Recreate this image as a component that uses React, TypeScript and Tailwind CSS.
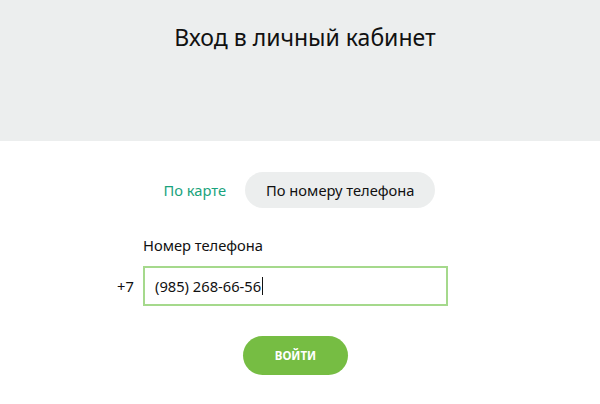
import React from "react";

export default function App() {
  return (
    <div className="w-[600px] h-[404px] bg-white overflow-hidden" style={{ fontFamily: '"Noto Sans", "Open Sans", sans-serif' }}>
      <div className="h-[141px] bg-[#eceeee] pt-[21px] flex justify-center">
        <h1 className="text-[23px] leading-[32px] text-[#111] pl-[10px] font-normal">Вход в личный кабинет</h1>
      </div>
      <div className="mt-[31px] flex justify-center items-center gap-[19px] pr-[1px]">
        <span className="text-[14.7px] text-[#1aa37c]">По карте</span>
        <span className="h-[36px] px-[21px] rounded-full bg-[#eceeee] flex items-center text-[14.7px] text-[#111]">По номеру телефона</span>
      </div>
      <div className="pl-[117px] mt-[27px] grid grid-cols-[26px_305px]">
        <div />
        <div className="text-[14.7px] leading-[21px] text-[#111]">Номер телефона</div>
        <div className="flex items-center text-[14.7px] text-[#111] mt-[10px]">+7</div>
        <div className="mt-[10px] h-[40px] border-2 border-[#a5d98c] flex items-center pl-[10px] text-[14.7px] text-[#111]">
          (985) 268-66-56<span className="inline-block w-px h-[18px] bg-[#111] ml-px" />
        </div>
        <div />
        <div className="mt-[30px] flex justify-center">
          <button className="w-[105px] h-[39px] rounded-full bg-[#76bd43] text-white text-[11.5px] font-bold">ВОЙТИ</button>
        </div>
      </div>
    </div>
  );
}
